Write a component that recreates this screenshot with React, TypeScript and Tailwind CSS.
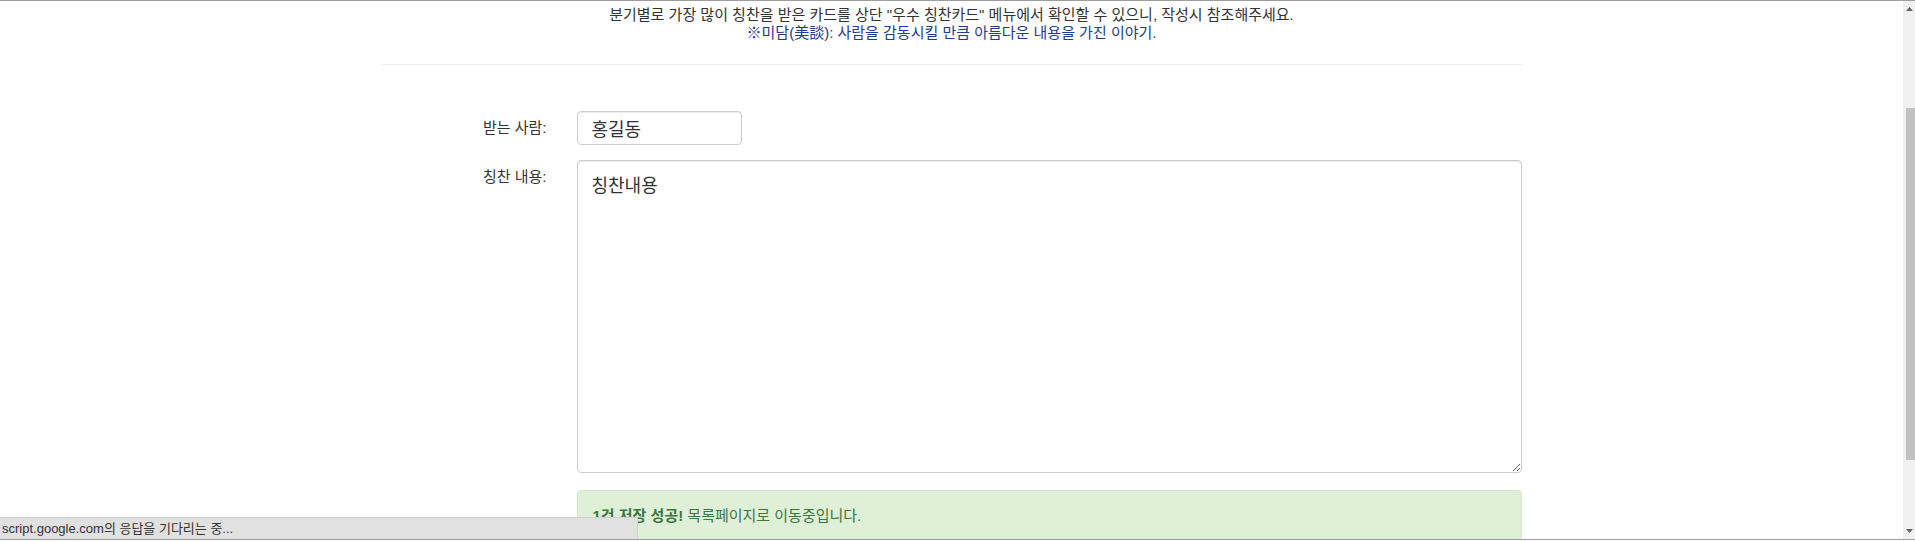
import React from 'react';

const App = () => {
  return (
    <div className="h-[542px] w-full flex flex-col bg-white overflow-hidden text-[#333] font-['Liberation_Sans','Noto_Sans_CJK_KR',sans-serif]">
      <div className="h-px bg-[#9e9e9e]" />
      <div className="flex flex-1 relative min-h-0">
        <main className="flex-1 overflow-hidden">
          <div className="w-[1170px] mx-auto px-[15px]">
            <div className="pt-[5px] text-center text-[15px] leading-[18px]">
              <p>분기별로 가장 많이 칭찬을 받은 카드를 상단 "우수 칭찬카드" 메뉴에서 확인할 수 있으니, 작성시 참조해주세요.</p>
              <p className="text-[#1f3d8c]">※미담(美談): 사람을 감동시킬 만큼 아름다운 내용을 가진 이야기.</p>
            </div>
            <hr className="mt-[22px] border-t border-[#eeeeee]" />

            <form className="mt-[46px] -mx-[15px] text-[15px]">
              <div className="flex">
                <label className="w-[195px] px-[15px] pt-[7px] text-right leading-[20px]">받는 사람:</label>
                <div className="flex-1 px-[15px]">
                  <input
                    defaultValue="홍길동"
                    className="w-[165px] h-[34px] pl-[14px] pr-[12px] text-[18px] border border-[#ccc] rounded-[4px] shadow-[inset_0_1px_1px_rgba(0,0,0,0.075)] outline-none"
                  />
                </div>
              </div>
              <div className="flex mt-[15px]">
                <label className="w-[195px] px-[15px] pt-[7px] text-right leading-[20px]">칭찬 내용:</label>
                <div className="flex-1 px-[15px]">
                  <textarea
                    defaultValue="칭찬내용"
                    className="block w-full h-[313px] pl-[14px] pr-[12px] pt-[12px] pb-[10px] text-[18px] leading-[26px] border border-[#ccc] rounded-[4px] shadow-[inset_0_1px_1px_rgba(0,0,0,0.075)] outline-none resize-y"
                  />
                </div>
              </div>
              <div className="flex mt-[17px]">
                <div className="w-[195px]" />
                <div className="flex-1 px-[15px]">
                  <div className="bg-[#dff0d8] border border-[#d6e9c6] rounded-[4px] p-[15px] text-[#3c763d] leading-[20px] h-[80px]">
                    <strong>1건 저장 성공!</strong> 목록페이지로 이동중입니다.
                  </div>
                </div>
              </div>
            </form>
          </div>
        </main>

        <div className="w-[12px] bg-[#f0f0f0] flex flex-col items-center">
          <div className="h-[16px] flex items-center justify-center">
            <svg width="7" height="4" viewBox="0 0 7 4"><path d="M0 4 L3.5 0 L7 4 Z" fill="#606060" /></svg>
          </div>
          <div className="mt-[91px] w-[9px] ml-[2px] h-[352px] bg-[#c1c1c1]" />
          <div className="flex-1" />
          <div className="h-[16px] flex items-center justify-center">
            <svg width="7" height="4" viewBox="0 0 7 4"><path d="M0 0 L3.5 4 L7 0 Z" fill="#606060" /></svg>
          </div>
        </div>

        <div className="absolute left-0 bottom-0 w-[638px] h-[22px] bg-[#e1e1e1] border-t border-r border-[#d0d0d0] pl-[2px] text-[13px] leading-[21px] text-[#333]">
          script.google.com의 응답을 기다리는 중...
        </div>
      </div>
      <div className="h-px bg-[#9e9e9e]" />
      <div className="h-[2px] bg-white" />
    </div>
  );
};

export default App;
